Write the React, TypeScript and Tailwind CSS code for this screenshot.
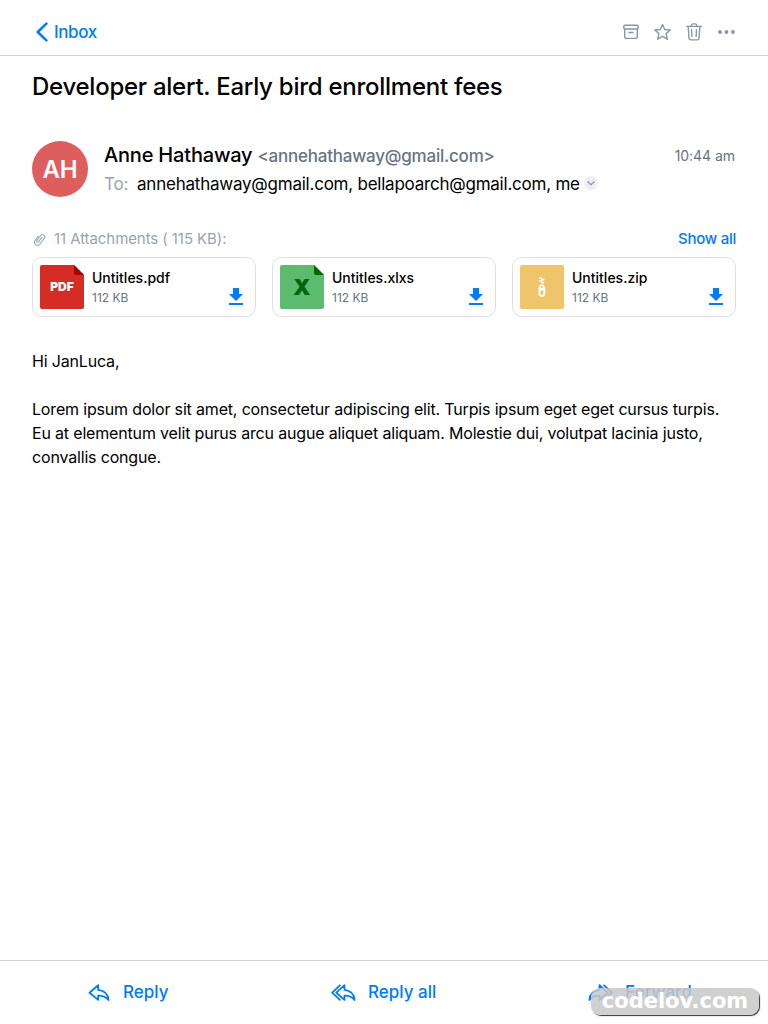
import React from 'react';

type FileKind = 'pdf' | 'xls' | 'zip';

function FileIcon({ kind }: { kind: FileKind }) {
  if (kind === 'pdf') {
    return (
      <div className="relative flex h-11 w-11 shrink-0 items-center justify-center">
        <svg className="absolute inset-0" width="44" height="44" viewBox="0 0 44 44">
          <path d="M2 0H34L44 10V42a2 2 0 0 1-2 2H2a2 2 0 0 1-2-2V2a2 2 0 0 1 2-2Z" fill="#d52c26" />
          <path d="M34 0 44 10H36a2 2 0 0 1-2-2Z" fill="#a10500" />
        </svg>
        <span className="relative font-['Inter',sans-serif] text-[12px] leading-none font-black text-white">PDF</span>
      </div>
    );
  }
  if (kind === 'xls') {
    return (
      <div className="relative flex h-11 w-11 shrink-0 items-center justify-center">
        <svg className="absolute inset-0" width="44" height="44" viewBox="0 0 44 44">
          <path d="M2 0H34L44 10V42a2 2 0 0 1-2 2H2a2 2 0 0 1-2-2V2a2 2 0 0 1 2-2Z" fill="#5dbb70" />
          <path d="M34 0 44 10H36a2 2 0 0 1-2-2Z" fill="#006900" />
        </svg>
        <span className="relative font-['Inter',sans-serif] text-[22px] leading-none font-black text-[#006510]">X</span>
      </div>
    );
  }
  return (
    <svg className="shrink-0" width="44" height="44" viewBox="0 0 44 44" fill="none">
      <rect width="44" height="44" rx="2" fill="#efc56c" />
      <path d="M19 12.2h3v1.5h2.3v1.8H22v1.3h2v1.5h-3v-1.7h-2v-1.7h2v-1.2h-2z" fill="#fff" />
      <path
        fillRule="evenodd"
        d="M20.3 19.6h3.2l1.8 3.4v5.6a3.4 3.4 0 0 1-6.8 0V23zM21.9 21a1.1 1.1 0 1 0 .01 2.2 1.1 1.1 0 0 0 0-2.2zM20.4 25.6v3a1.5 1.5 0 0 0 3 0v-3z"
        fill="#fff"
      />
    </svg>
  );
}

function DownloadIcon() {
  return (
    <svg width="14" height="17" viewBox="0 0 14 17" fill="#007aff">
      <path d="M4 0h6v6h4l-7 7-7-7h4zM0 15h14v2H0z" />
    </svg>
  );
}

function Attachment({ name, kind }: { name: string; kind: FileKind }) {
  return (
    <div className="flex h-[60px] items-center rounded-[10px] border border-[#e0e0e2] px-[7px]">
      <FileIcon kind={kind} />
      <div className="ml-2 flex-1">
        <div className="text-sm leading-5 font-medium">{name}</div>
        <div className="text-xs leading-[19px] text-[#6b7280]">112 KB</div>
      </div>
      <div className="mt-[18px] mr-[5px]">
        <DownloadIcon />
      </div>
    </div>
  );
}

const stroke = {
  fill: 'none',
  stroke: 'currentColor',
  strokeWidth: 1.5,
  strokeLinecap: 'round' as const,
  strokeLinejoin: 'round' as const,
};

export default function App() {
  return (
    <div className="relative flex h-[1024px] w-[768px] flex-col overflow-hidden bg-white font-['Inter',sans-serif] text-black">
      <header className="flex h-14 shrink-0 items-start justify-between border-b border-[#d4d4d6] pt-5 pr-[33px] pl-9">
        <div className="flex h-6 items-center text-[#007aff]">
          <svg width="12" height="20" viewBox="0 0 12 20" {...stroke} strokeWidth="2.5">
            <path d="M10.4 1.7 1.7 10l8.7 8.3" />
          </svg>
          <span className="ml-1.5 pt-0.5 text-[17px] font-medium tracking-[-0.4px]">Inbox</span>
        </div>
        <div className="flex h-6 items-center text-[#8b95a7]">
          <svg width="16" height="16" viewBox="0 0 16 16" {...stroke} strokeWidth="1.4">
            <rect x="0.8" y="1.2" width="14.4" height="3.8" rx="1.2" />
            <path d="M1.7 5.2v7.2a2 2 0 0 0 2 2h8.6a2 2 0 0 0 2-2V5.2M5.9 8.5h4.2" />
          </svg>
          <svg className="ml-[15px]" width="17" height="18" viewBox="0 0 17 18" {...stroke} strokeWidth="1.4">
            <path d="m8.5 1.5 2.2 5 5.5.5-4.1 3.6 1.2 5.6-4.8-2.8-4.8 2.8 1.2-5.6L.8 7l5.5-.5z" />
          </svg>
          <svg className="ml-[15px]" width="16" height="18" viewBox="0 0 16 18" {...stroke} strokeWidth="1.4">
            <path d="M.8 3.4h14.4M5.3 3.2V2.6A1.7 1.7 0 0 1 7 .9h2a1.7 1.7 0 0 1 1.7 1.7v.6M2.2 3.6l.8 11.6a1.9 1.9 0 0 0 1.9 1.7h6.2a1.9 1.9 0 0 0 1.9-1.7l.8-11.6M5.5 6.7l.4 6.8M10.5 6.7l-.4 6.8" />
          </svg>
          <svg className="ml-4" width="17" height="4" viewBox="0 0 17 4" fill="currentColor">
            <circle cx="2" cy="2" r="1.9" />
            <circle cx="8.5" cy="2" r="1.9" />
            <circle cx="15" cy="2" r="1.9" />
          </svg>
        </div>
      </header>

      <main className="flex-1 px-8">
        <h1 className="mt-[15px] text-2xl leading-8 font-medium tracking-[-0.26px]">Developer alert. Early bird enrollment fees</h1>

        <section className="mt-[38px] flex h-14">
          <div className="flex h-14 w-14 items-center justify-center rounded-full bg-[#de5e5e] pt-0.5 text-2xl font-semibold tracking-[-0.2px] text-white">AH</div>
          <div className="ml-4 flex-1">
            <div className="flex h-7 items-center">
              <span className="text-xl font-medium tracking-[-0.19px]">Anne Hathaway</span>
              <span className="ml-[5px] pt-[3px] text-[17px] font-medium tracking-[-0.22px] text-[#6b7280]">&lt;annehathaway@gmail.com&gt;</span>
              <span className="mr-px ml-auto pt-0.5 text-sm tracking-[-0.05px] text-[#6b7280]">10:44 am</span>
            </div>
            <div className="flex h-7 items-center text-[17px] tracking-[-0.23px]">
              <span className="pt-[3px] text-[#9ca3af]">To:</span>
              <span className="ml-[9px] pt-[3px]">annehathaway@gmail.com, bellapoarch@gmail.com, me</span>
              <span className="ml-1 flex h-[14px] w-[14px] items-center justify-center rounded-full bg-[#eeeff2] text-[#8b95a7]">
                <svg width="8" height="5" viewBox="0 0 8 5" {...stroke} strokeWidth="1.2">
                  <path d="m.8.8 3.2 3 3.2-3" />
                </svg>
              </span>
            </div>
          </div>
        </section>

        <section className="mt-[30px]">
          <div className="flex h-6 items-center text-[15px]">
            <svg className="ml-[1px] text-[#9ca3af]" width="13" height="13" viewBox="0 0 24 24" {...stroke} strokeWidth="2">
              <path d="m16.6 8.2-6.5 8.2a2 2 0 0 1-3.1-2.5l7.2-9.3a4.2 4.2 0 0 1 6.7 5.1l-8.4 10.9a5.5 5.5 0 0 1-8.7-6.7l6-7.7" />
            </svg>
            <span className="ml-2 tracking-[-0.08px] text-[#9ca3af]">11 Attachments ( 115 KB):</span>
            <span className="ml-auto font-medium tracking-[-0.25px] text-[#007aff]">Show all</span>
          </div>
          <div className="mt-[6px] grid grid-cols-3 gap-4">
            <Attachment name="Untitles.pdf" kind="pdf" />
            <Attachment name="Untitles.xlxs" kind="xls" />
            <Attachment name="Untitles.zip" kind="zip" />
          </div>
        </section>

        <article className="mt-8 text-base leading-6 tracking-[-0.172px]">
          <p>Hi JanLuca,</p>
          <p className="mt-6">
            Lorem ipsum dolor sit amet, consectetur adipiscing elit. Turpis ipsum eget eget cursus turpis.
            <br />
            Eu at elementum velit purus arcu augue aliquet aliquam. Molestie dui, volutpat lacinia justo,
            <br />
            convallis congue.
          </p>
        </article>
      </main>

      <footer className="flex h-16 shrink-0 items-center border-t border-[#d4d4d6] pl-[88px] text-[17px] font-medium text-[#007aff]">
        <div className="flex w-[243px] items-center">
          <svg width="22" height="18" viewBox="0 0 22 18" {...stroke} strokeWidth="1.8">
            <path d="M10.2 1.2 1.5 8.7l8.7 7.2v-4.2c4.3-.3 7.1.9 10.3 4.3-.4-6.2-4.2-9.5-10.3-10.2z" />
          </svg>
          <span className="ml-[13px]">Reply</span>
        </div>
        <div className="flex w-[257px] items-center">
          <svg width="25" height="18" viewBox="0 0 25 18" {...stroke} strokeWidth="1.8">
            <path d="M13.5 1.2 5.3 8.7l8.2 7.2v-4.2c4.3-.3 7.2.9 10.1 4.3-.4-6.2-4-9.5-10.1-10.2zM8.9 1.3 1.2 8.7l7.7 7.1" />
          </svg>
          <span className="ml-3">Reply all</span>
        </div>
        <div className="flex items-center">
          <svg width="25" height="18" viewBox="0 0 25 18" {...stroke} strokeWidth="1.8">
            <path d="M11.5 1.2 19.7 8.7l-8.2 7.2v-4.2C7.2 11.4 4.3 12.6 1.4 16 1.8 9.8 5.4 6.5 11.5 5.8zM16.1 1.3l7.7 7.4-7.7 7.1" />
          </svg>
          <span className="ml-3">Forward</span>
        </div>
      </footer>

      <div className="absolute top-[988px] left-[591px] flex h-[27px] w-[168px] items-center justify-center rounded-[9px] bg-[#c8c8c8]/85 font-['DejaVu_Sans',sans-serif] text-[21px] leading-none font-bold text-white shadow-[1px_1px_1px_#333]">
        codelov.com
      </div>
    </div>
  );
}
